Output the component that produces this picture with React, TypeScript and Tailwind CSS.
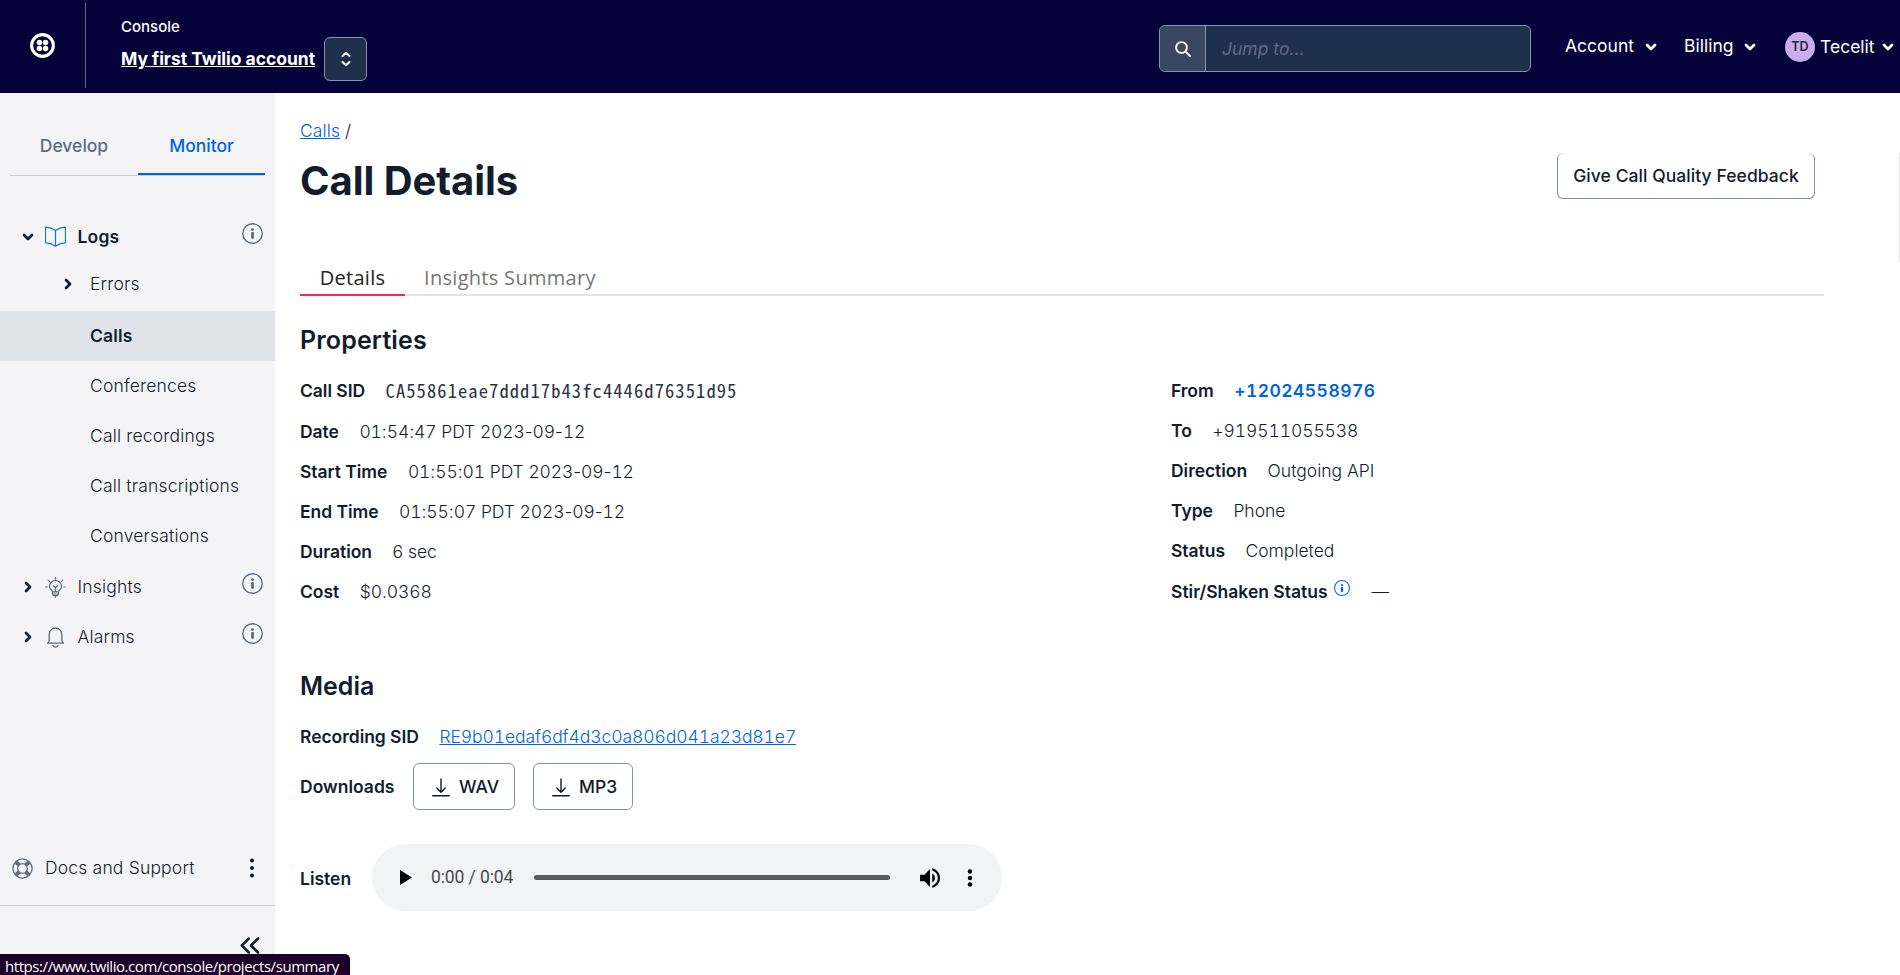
import React from "react";

type IconProps = { className?: string };

const ChevronDown = ({ className = "" }: IconProps) => (
  <svg className={className} width="12" height="8" viewBox="0 0 12 8" fill="none" stroke="currentColor" strokeWidth="2.7" strokeLinecap="round" strokeLinejoin="round">
    <path d="M2 2l4 4 4-4" />
  </svg>
);

const ChevronRight = ({ className = "" }: IconProps) => (
  <svg className={className} width="8" height="12" viewBox="0 0 8 12" fill="none" stroke="currentColor" strokeWidth="2.7" strokeLinecap="round" strokeLinejoin="round">
    <path d="M2 2l4 4-4 4" />
  </svg>
);

const Info = ({ className = "" }: IconProps) => (
  <svg className={className} viewBox="0 0 20 20" fill="none">
    <circle cx="10" cy="10" r="9.3" stroke="currentColor" strokeWidth="1.3" />
    <circle cx="10" cy="6.3" r="1.4" fill="currentColor" />
    <rect x="8.6" y="8.6" width="2.8" height="6.4" rx="1" fill="currentColor" />
  </svg>
);

const Logo = () => (
  <svg width="25" height="25" viewBox="0 0 26 26">
    <circle cx="13" cy="13" r="11.3" fill="none" stroke="#fff" strokeWidth="3.2" />
    {[9.8, 16.2].map((x) => [9.8, 16.2].map((y) => <circle key={`${x}${y}`} cx={x} cy={y} r="2.85" fill="#fff" />))}
  </svg>
);

const Book = () => (
  <svg className="mb-px" width="21" height="21" viewBox="0 0 21 21" fill="none" stroke="#1a6cec" strokeWidth="1.2" strokeLinejoin="round">
    <path d="M10.5 4.5C8 2.6 4.8 1.4 1 1.2c-.4 0-.5.2-.5.5v14.6c0 .4.2.5.5.6 3.6.3 6.8 1.4 9.5 3.3 2.7-1.9 5.9-3 9.500-3.300.3-.1.5-.2.5-.6V1.700c0-.3-.1-.5-.5-.5-3.800.2-7 1.400-9.500 3.300zM10.500 4.500v15.500" />
  </svg>
);

const Bulb = () => (
  <svg width="21" height="21" viewBox="0 0 21 21" fill="none" stroke="#606b85" strokeWidth="1.2" strokeLinecap="round" strokeLinejoin="round">
    <path d="M7.500 14.800c0-1.500-3-2.500-3-5.300a6 6 0 0 1 12 0c0 2.800-3 3.800-3 5.300zM7.500 14.800v2.400l1.200 1.400h3.600l1.200-1.400v-2.400M7.500 17h6M10.500 18.600v1.700M10.500 14.500v-4M8.300 8.800l2.200 1.700 2.200-1.700M10.500.7v1.600M3.200 3.200l1.200 1.200M17.800 3.200l-1.200 1.200M.7 10h1.500M18.800 10h1.500" />
  </svg>
);

const Bell = () => (
  <svg width="21" height="21" viewBox="0 0 21 21" fill="none" stroke="#606b85" strokeWidth="1.3" strokeLinecap="round" strokeLinejoin="round">
    <path d="M2.500 16.200c1.300-.9 1.700-2 1.700-3.700V7.300a6.300 6.300 0 0 1 12.600 0v5.200c0 1.700.4 2.800 1.700 3.700zM8 18.600c.6 2 4.400 2 5 0" />
  </svg>
);

const Lifebuoy = () => (
  <svg width="21" height="21" viewBox="0 0 21 21" fill="none" stroke="#606b85">
    <circle cx="10.5" cy="10.5" r="9.6" strokeWidth="1.3" />
    <circle cx="10.5" cy="10.5" r="4.8" strokeWidth="1.3" />
    <path d="M4 4l3.200 3.200M17 4l-3.200 3.200M4 17l3.200-3.200M17 17l-3.200-3.200" strokeWidth="4" />
  </svg>
);

const Download = () => (
  <svg width="18" height="19" viewBox="0 0 18 19" fill="none" stroke="#121c2d" strokeWidth="1.4" strokeLinecap="round" strokeLinejoin="round">
    <path d="M9 1v13M4.800 10L9 14.200 13.200 10" />
    <path d="M.8 17.700h16.400" strokeWidth="1.6" />
  </svg>
);

const Header = () => (
  <header className="flex h-[93px] shrink-0 bg-[#06033a] text-white">
    <div className="flex w-[85px] items-center pl-[30px] pb-[2px]">
      <Logo />
    </div>
    <div className="mt-[3px] h-[85px] w-px bg-[#606b85]" />
    <div className="flex flex-col pl-[35px] pt-[15px]">
      <span className="h-[24px] text-[15px] leading-[24px] font-medium">Console</span>
      <span className="h-[40px] text-[17.5px] leading-[40px] font-bold tracking-[-0.03px] whitespace-nowrap underline underline-offset-1">My first Twilio account</span>
    </div>
    <div className="mt-[37px] ml-[9px] flex h-[44px] w-[43px] items-center justify-center rounded-[6px] border border-[#8891aa] bg-[#1f304c]">
      <svg width="10" height="16" viewBox="0 0 10 16" fill="none" stroke="#fff" strokeWidth="2" strokeLinecap="round" strokeLinejoin="round">
        <path d="M1.500 5L5 1.800 8.500 5M1.500 11L5 14.200 8.500 11" />
      </svg>
    </div>
    <div className="mt-[25px] ml-auto flex h-[47px] w-[372px] overflow-hidden rounded-[6px] border border-[#8891aa] bg-[#1f304c]">
      <div className="flex w-[46px] items-center justify-center border-r border-[#8891aa] bg-[#394762]">
        <svg width="18" height="18" viewBox="0 0 18 18" fill="none" stroke="#fff" strokeWidth="1.9" strokeLinecap="round">
          <circle cx="7.5" cy="7.5" r="5.4" />
          <path d="M11.600 11.600l4.400 4.400" />
        </svg>
      </div>
      <span className="pl-[16px] text-[17.5px] leading-[46px] text-[#606b85] italic">Jump to...</span>
    </div>
    <nav className="flex w-[369px] items-center pl-[34px] text-[17.5px] leading-[24px]">
      <span className="mb-[2px] w-[80px]">Account</span>
      <ChevronDown />
      <span className="mb-[2px] ml-[27px] w-[60px]">Billing</span>
      <ChevronDown />
      <span className="ml-[29px] flex size-[30px] items-center justify-center rounded-full bg-[#c9aeee] text-[12.5px] font-semibold text-[#2c2540]">TD</span>
      <span className="ml-[5px] w-[62px]">Tecelit</span>
      <ChevronDown />
    </nav>
  </header>
);

const Group = ({ open, icon, label, bold }: { open?: boolean; icon: React.ReactNode; label: string; bold?: boolean }) => (
  <div className="flex h-[50px] items-center pr-[12px]">
    <span className="flex w-[45px] justify-center pl-[10px]">{open ? <ChevronDown /> : <ChevronRight />}</span>
    {icon}
    <span className={bold ? "pl-[11.5px] font-semibold" : "pl-[11.5px]"}>{label}</span>
    <Info className="mb-[7px] ml-auto size-[21px] text-[#606b85]" />
  </div>
);

const Sidebar = () => (
  <aside className="flex w-[275px] shrink-0 flex-col bg-[#f4f4f6] text-[17.5px] font-light tracking-[0.18px] text-[#121c2d]">
    <div className="mx-[10px] mt-[22px] flex h-[61px] items-start font-medium tracking-normal">
      <span className="h-[61px] w-[128px] border-b border-[#cacdd8] text-center leading-[61px] text-[#606b85]">Develop</span>
      <div className="h-[61px] w-[127px] border-b border-[#cacdd8]">
        <div className="h-[60px] border-b-2 border-[#0263e0] text-center leading-[61px] text-[#0263e0]">Monitor</div>
      </div>
    </div>
    <div className="mt-[36px]">
      <Group open icon={<Book />} label="Logs" bold />
      <div className="flex h-[45px] items-center pl-[64px]">
        <ChevronRight className="mb-px" />
        <span className="pl-[18px]">Errors</span>
      </div>
      <div className="mt-[4px] h-[50px] bg-[#e1e3ea] pl-[90px] leading-[50px] font-semibold">Calls</div>
      {["Conferences", "Call recordings", "Call transcriptions", "Conversations"].map((t) => (
        <div key={t} className="h-[50px] pl-[90px] leading-[50px]">{t}</div>
      ))}
      <div className="h-px" />
      <Group icon={<Bulb />} label="Insights" />
      <Group icon={<Bell />} label="Alarms" />
    </div>
    <div className="mt-auto flex h-[75px] items-center border-b border-[#cacdd8] pl-[12px]">
      <Lifebuoy />
      <span className="pl-[12px]">Docs and Support</span>
      <svg className="ml-auto mr-[20px]" width="6" height="20" viewBox="0 0 6 20" fill="#121c2d">
        <circle cx="3" cy="2.5" r="2" /><circle cx="3" cy="10" r="2" /><circle cx="3" cy="17.5" r="2" />
      </svg>
    </div>
    <div className="flex h-[69px] justify-end pt-[31px] pr-[15px]">
      <svg width="20" height="17" viewBox="0 0 20 17" fill="none" stroke="#121c2d" strokeWidth="2.5" strokeLinecap="round" strokeLinejoin="round">
        <path d="M8.800 1.500L1.800 8.500l7 7M18 1.500L11 8.500l7 7" />
      </svg>
    </div>
  </aside>
);

/* Digits share one width while punctuation keeps its natural one. */
const Numeric = ({ text }: { text: string }) => (
  <span className="tracking-[-0.1px] whitespace-pre">
    {text.split(/(\d+)/).map((part, i) => (
      <span key={i} className={i % 2 ? "tabular-nums" : ""}>{part}</span>
    ))}
  </span>
);

const Field = ({ label, children }: { label: string; children: React.ReactNode }) => (
  <div className="flex h-[40px] items-center whitespace-nowrap">
    <span className="mr-[20.5px] font-semibold tracking-[-0.04px]">{label}</span>
    {children}
  </div>
);

const DownloadButton = ({ label, className }: { label: string; className: string }) => (
  <button className={`mr-[18px] flex h-[47px] items-center gap-[9px] rounded-[6px] border border-[#8891aa] pt-[2px] pl-[18px] font-medium ${className}`}>
    <Download />
    {label}
  </button>
);

const Player = () => (
  <div className="flex h-[67px] w-[630px] items-center rounded-full bg-[#f1f3f4] pl-[28px]">
    <svg width="12" height="15" viewBox="0 0 12 15"><path d="M0 0v15l12-7.500z" /></svg>
    <span className="ml-[19px] w-[103px] font-[Roboto] text-[17.5px] font-normal tracking-[-0.1px] text-[#4a4a4a]">0:00 / 0:04</span>
    <span className="h-[5px] w-[356px] rounded-full bg-[#5a5a5a]" />
    <svg className="ml-[30px]" width="20" height="20" viewBox="3 3 18 18">
      <path d="M3 9v6h4l5 5V4L7 9H3zm13.500 3A4.500 4.500 0 0 0 14 7.970v8.050c1.480-.73 2.500-2.250 2.500-4.020zM14 3.230v2.060c2.890.86 5 3.540 5 6.710s-2.110 5.850-5 6.710v2.060c4.010-.91 7-4.490 7-8.770s-2.990-7.860-7-8.770z" />
    </svg>
    <svg className="ml-[27px]" width="6" height="18" viewBox="0 0 6 18"><circle cx="3" cy="2.5" r="2.2" /><circle cx="3" cy="9" r="2.2" /><circle cx="3" cy="15.5" r="2.2" /></svg>
  </div>
);

const Main = () => (
  <main className="flex flex-1 flex-col bg-white pl-[25px] text-[17.5px] font-light text-[#121c2d]">
    <div className="mt-[24px] h-[28px] leading-[28px] tracking-[0.1px]">
      <a className="text-[#0263e0] underline underline-offset-1">Calls</a> /
    </div>
    <div className="flex h-[117px]">
      <h1 className="pt-[11px] text-[40px] leading-[50px] font-bold tracking-[-0.06px]">Call Details</h1>
      <div className="mt-[8px] mr-[84px] ml-auto flex h-[46px] w-[258px] items-center justify-center rounded-[6px] border border-t-0 border-[#8891aa] pt-px font-medium tracking-[0.06px] whitespace-nowrap">Give Call Quality Feedback</div>
      <div className="mt-[8px] w-px bg-[#e8e8ea]" />
    </div>
    <div className="mr-[76px] flex h-[34px] border-b-2 border-[#e4e4e4] font-['Open_Sans'] text-[20px] leading-[32px] font-normal tracking-[0.3px]">
      <span className="h-[34px] w-[105px] border-b-2 border-[#f22f46] text-center text-[#222]">Details</span>
      <span className="pl-[19px] text-[#767676]">Insights Summary</span>
    </div>
    <h2 className="mt-[28px] h-[32px] text-[25px] leading-[32px] font-semibold tracking-[0.15px]">Properties</h2>
    <div className="mt-[15px] flex h-[242px]">
      <div className="w-[871px]">
        <Field label="Call SID"><span className="mb-[3px] font-['Noto_Sans_Mono_CJK_JP','Noto_Sans_Mono_CJK_SC','DejaVu_Sans_Mono',monospace] text-[18.5px] leading-[24px] tracking-[1.1px] text-[#2a3342]">CA55861eae7ddd17b43fc4446d76351d95</span></Field>
        <div className="h-px" />
        <Field label="Date"><Numeric text="01:54:47 PDT 2023-09-12" /></Field>
        <Field label="Start Time"><Numeric text="01:55:01 PDT 2023-09-12" /></Field>
        <Field label="End Time"><Numeric text="01:55:07 PDT 2023-09-12" /></Field>
        <Field label="Duration">6 sec</Field>
        <Field label="Cost"><Numeric text="$0.0368" /></Field>
      </div>
      <div>
        <Field label="From"><span className="font-semibold tracking-[0.45px] text-[#0263e0] tabular-nums">+12024558976</span></Field>
        <Field label="To"><Numeric text="+919511055538" /></Field>
        <Field label="Direction">Outgoing API</Field>
        <Field label="Type">Phone</Field>
        <Field label="Status">Completed</Field>
        <div className="flex h-[42px] items-center">
          <span className="font-semibold">Stir/Shaken Status</span>
          <Info className="mb-[9px] ml-[6px] size-[16px] text-[#0263e0]" />
          <span className="ml-[22px]">—</span>
        </div>
      </div>
    </div>
    <h2 className="mt-[57px] h-[32px] text-[25px] leading-[32px] font-semibold">Media</h2>
    <div className="mt-[15px]">
      <Field label="Recording SID"><a className="tracking-[-0.08px] text-[#0263e0] tabular-nums underline underline-offset-1">RE9b01edaf6df4d3c0a806d041a23d81e7</a></Field>
    </div>
    <div className="mt-[6px] flex h-[47px] items-center">
      <span className="w-[113px] pt-[2px] font-semibold">Downloads</span>
      <DownloadButton label="WAV" className="w-[102px]" />
      <DownloadButton label="MP3" className="w-[100px]" />
    </div>
    <div className="mt-[34px] flex items-center">
      <span className="w-[72px] pt-[3px] font-semibold">Listen</span>
      <Player />
    </div>
  </main>
);

export default function App() {
  return (
    <div className="relative flex h-[975px] w-[1900px] flex-col overflow-hidden font-[Inter,sans-serif]">
      <Header />
      <div className="flex min-h-0 flex-1">
        <Sidebar />
        <Main />
      </div>
      <div className="absolute bottom-0 left-0 h-[21px] w-[350px] rounded-tr-[5px] bg-[#1c0029] pl-[5px] font-['Open_Sans'] text-[15px] leading-[25px] tracking-[-0.43px] whitespace-nowrap text-white">https://www.twilio.com/console/projects/summary</div>
    </div>
  );
}
